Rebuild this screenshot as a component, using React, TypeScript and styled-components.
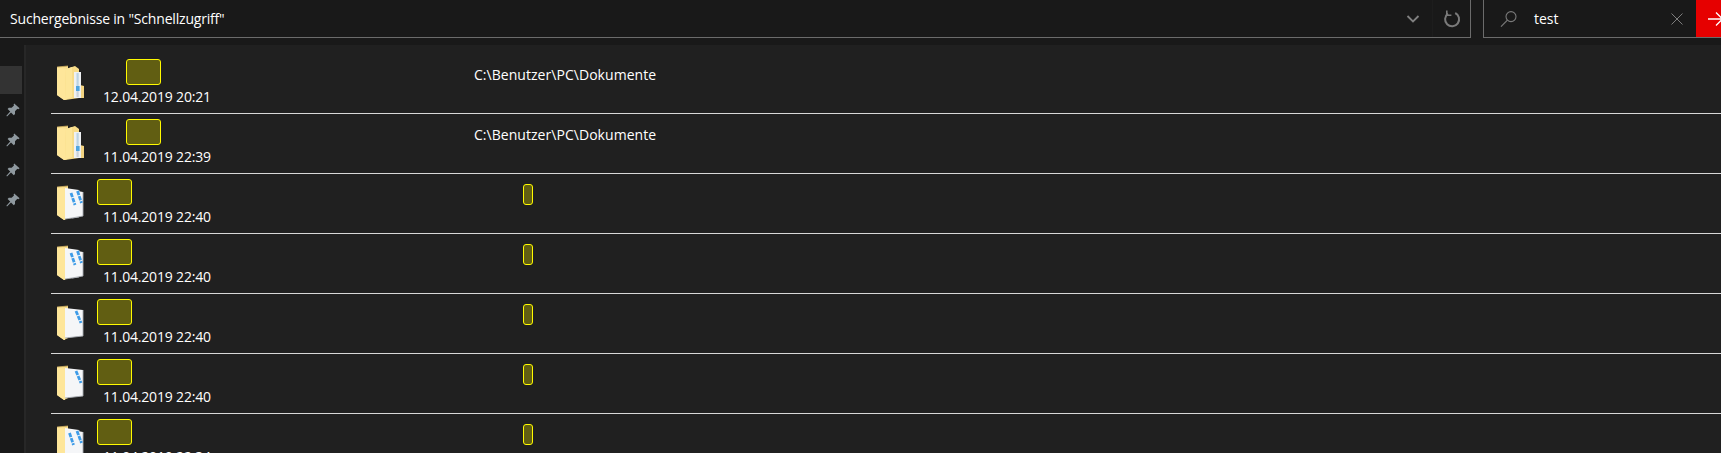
import React from "react";
import styled, { createGlobalStyle } from "styled-components";

const Global = createGlobalStyle`
  html, body { margin: 0; padding: 0; background: #191919; height: 100%; overflow: hidden; }
  #root { height: 453px; overflow: hidden; }
`;

const Page = styled.div`
  width: 1721px;
  height: 453px;
  overflow: hidden;
  background: #191919;
  color: #fff;
  font-family: "Open Sans", "Noto Sans", "Liberation Sans", sans-serif;
  font-size: 14px;
  display: flex;
  flex-direction: column;
`;

const TopBar = styled.header`
  flex: none;
  height: 38px;
  display: flex;
  gap: 12px;
`;

const AddressBar = styled.div`
  width: 1471px;
  box-sizing: border-box;
  border-bottom: 1px solid #6b6b6b;
  border-right: 1px solid #6b6b6b;
  display: flex;
  align-items: center;
  padding-left: 10px;
`;

const Title = styled.div`
  flex: 1;
  white-space: nowrap;
  letter-spacing: -0.19px;
`;

const BarButton = styled.div<{ $split?: boolean }>`
  width: ${(p) => (p.$split ? 38 : 39)}px;
  height: 37px;
  display: flex;
  align-items: center;
  justify-content: center;
  border-left: ${(p) => (p.$split ? "1px solid #1d1d1d" : "none")};
  box-sizing: border-box;
`;

const SearchBox = styled.div`
  flex: 1;
  box-sizing: border-box;
  border-bottom: 1px solid #6b6b6b;
  border-left: 1px solid #6b6b6b;
  display: flex;
  align-items: center;
`;

const SearchIconCell = styled.div`
  width: 50px;
  height: 37px;
  display: flex;
  align-items: center;
  justify-content: center;
  box-sizing: border-box;
`;

const SearchText = styled.div`
  flex: 1;
`;

const ClearCell = styled.div`
  width: 39px;
  display: flex;
  justify-content: center;
`;

const GoButton = styled.div`
  width: 25px;
  height: 37px;
  background: #e60000;
  overflow: hidden;
  display: flex;
  align-items: center;
  padding-left: 12px;
  box-sizing: border-box;
`;

const Main = styled.main`
  flex: 1;
  min-height: 0;
  display: flex;
  padding-top: 7px;
`;

const Sidebar = styled.aside`
  width: 24px;
  flex: none;
  padding-top: 21px;
  border-right: 2px solid #272727;
`;

const ActiveSlot = styled.div`
  width: 22px;
  height: 28px;
  margin-bottom: 1px;
  background: #333;
`;

const PinSlot = styled.div`
  width: 22px;
  height: 30px;
  padding-left: 4px;
  box-sizing: border-box;
  display: flex;
  align-items: center;
  justify-content: center;
`;

const Content = styled.section`
  flex: 1;
  background: #202020;
  padding: 9px 0 0 25px;
  overflow: hidden;
`;

const Row = styled.div`
  height: 60px;
  box-sizing: border-box;
  border-bottom: 1px solid #d8d8d8;
  display: flex;
  padding-left: 6px;
`;

const IconCell = styled.div`
  width: 40px;
  flex: none;
  padding-top: 10px;
  box-sizing: border-box;
  svg { display: block; filter: blur(0.25px); }
`;

const NameCell = styled.div`
  width: 377px;
  flex: none;
  padding-top: 5px;
  box-sizing: border-box;
`;

const Mark = styled.div<{ $w: number; $h: number; $ml?: number }>`
  width: ${(p) => p.$w}px;
  height: ${(p) => p.$h}px;
  margin-left: ${(p) => p.$ml ?? 0}px;
  box-sizing: border-box;
  background: #615e12;
  border: 1px solid #fffa00;
  border-radius: 3px;
`;

const DateText = styled.div`
  margin: 2px 0 0 6px;
  line-height: 19px;
  color: #fff;
  letter-spacing: -0.18px;
  white-space: nowrap;
`;

const PathCell = styled.div`
  padding-top: 11px;
  line-height: 19px;
  white-space: nowrap;
  letter-spacing: 0.04px;
`;

const SmallMarkCell = styled.div`
  padding-top: 10px;
`;

const Chevron = () => (
  <svg width="14" height="10" viewBox="0 0 14 10" fill="none">
    <path d="M1.5 2 L7 7.5 L12.5 2" stroke="#808080" strokeWidth="1.8" />
  </svg>
);

const Refresh = () => (
  <svg width="18" height="18" viewBox="0 0 18 18" fill="none">
    <path d="M5 3.6 A7 7 0 1 0 12.2 3" stroke="#7a7a7a" strokeWidth="2" />
    <path d="M3.8 0.6 L3.8 5.2 L8.4 5.2" stroke="#7a7a7a" strokeWidth="1.6" />
  </svg>
);

const SearchGlass = () => (
  <svg width="18" height="18" viewBox="0 0 18 18" fill="none">
    <circle cx="11" cy="6.6" r="5" stroke="#7a7a7a" strokeWidth="1.1" />
    <path d="M7.4 10.2 L1 16.6" stroke="#7a7a7a" strokeWidth="1.2" />
  </svg>
);

const Cross = () => (
  <svg width="12" height="12" viewBox="0 0 12 12" fill="none">
    <path d="M0.5 0.5 L11.5 11.5 M11.5 0.5 L0.5 11.5" stroke="#7d7d7d" strokeWidth="1" />
  </svg>
);

const Arrow = () => (
  <svg width="20" height="14" viewBox="0 0 20 14" fill="none" style={{ flex: "none" }}>
    <path d="M0 7 H14 M8 0.5 L14.5 7 L8 13.5" stroke="#fff" strokeWidth="1.3" />
  </svg>
);

const Pin = () => (
  <svg width="14" height="14" viewBox="0 0 14 14">
    <path
      d="M8.2 0.4 L13.6 5.2 L12.4 6.2 L11.4 5.8 L9 8.2 L9 11 L7.8 12.2 L5 9.4 L1 13.4 L0.4 12.8 L4.2 8.6 L1.6 6 L2.8 4.8 L5.6 4.8 L8 2.6 L7.6 1.4 Z"
      fill="#8f999f"
    />
  </svg>
);

type Kind = "zip" | "docs" | "doc" | "many";

const Paper = ({ x, y, w, h }: { x: number; y: number; w: number; h: number }) => (
  <>
    <path
      d={`M${x} ${y} L${x + w} ${y + 2} L${x + w} ${y + h - 2} L${x} ${y + h} Z`}
      fill="#f5f6f8"
    />
    <path
      d={`M${x + w} ${y + 2} L${x + w} ${y + h - 2} L${x} ${y + h}`}
      fill="none"
      stroke="#a9adb2"
      strokeWidth="0.9"
    />
  </>
);

const Squiggle = ({ d }: { d: string }) => (
  <path d={d} fill="none" stroke="#3e9ce8" strokeWidth="2.8" strokeDasharray="4.4 1" />
);

const FolderBase = ({ kind }: { kind: Kind }) => (
  <>
    <path d="M0 3 L11 2 L11 34 L7 36 L0 31 Z" fill="#fbdf8f" />
    <path d="M0 3 L9 5 L8 36 L7 36 L0 31 Z" fill="#fee69a" />
    <path d="M0 3 L11 2" stroke="#c9a95c" strokeWidth="0.8" />
    {kind === "zip" && <path d="M9 5 L18 2 L22 5 L22 34 L8 36 Z" fill="#f8dc88" />}
  </>
);

const FolderIcon = ({ kind }: { kind: Kind }) => (
  <svg width="28" height="37" viewBox="0 0 28 37">
    <FolderBase kind={kind} />
    {kind === "zip" && (
      <>
        <path d="M9 5 L15 3 L15 33 L8 36 Z" fill="#fde699" />
        <path d="M23 21 L27 22 L27 34 L23 34 Z" fill="#f3d482" />
        <rect x="17" y="8" width="7" height="26" fill="#eef1f3" />
        <rect x="19.5" y="9" width="2.2" height="14" fill="#bcd3e2" />
        <rect x="19" y="22" width="3.6" height="5" fill="#4fa5e0" />
        <rect x="19.5" y="27" width="2.2" height="6" fill="#cbd2d8" />
      </>
    )}
    {kind === "docs" && (
      <>
        <Paper x={8} y={4} w={14} h={31} />
        <Paper x={15} y={6} w={11} h={28} />
        <Squiggle d="M14 9 L18 21" />
        <Squiggle d="M20.5 7 L24.5 19" />
      </>
    )}
    {kind === "doc" && (
      <>
        <Paper x={8} y={4} w={18} h={30} />
        <Squiggle d="M19 7 L24 19" />
      </>
    )}
    {kind === "many" && (
      <>
        <Paper x={8} y={4} w={14} h={31} />
        <Paper x={15} y={6} w={11} h={28} />
        <Squiggle d="M12.5 9 L16.5 21" />
        <Squiggle d="M20 7 L24.5 19" />
      </>
    )}
  </svg>
);

type Item = {
  kind: Kind;
  indent: number;
  date: string;
  path?: string;
};

const items: Item[] = [
  { kind: "zip", indent: 29, date: "12.04.2019 20:21", path: "C:\\Benutzer\\PC\\Dokumente" },
  { kind: "zip", indent: 29, date: "11.04.2019 22:39", path: "C:\\Benutzer\\PC\\Dokumente" },
  { kind: "docs", indent: 0, date: "11.04.2019 22:40" },
  { kind: "docs", indent: 0, date: "11.04.2019 22:40" },
  { kind: "doc", indent: 0, date: "11.04.2019 22:40" },
  { kind: "doc", indent: 0, date: "11.04.2019 22:40" },
  { kind: "many", indent: 0, date: "11.04.2019 22:34" },
];

export default function App() {
  return (
    <Page>
      <Global />
      <TopBar>
        <AddressBar>
          <Title>Suchergebnisse in "Schnellzugriff"</Title>
          <BarButton><Chevron /></BarButton>
          <BarButton $split><Refresh /></BarButton>
        </AddressBar>
        <SearchBox>
          <SearchIconCell><SearchGlass /></SearchIconCell>
          <SearchText>test</SearchText>
          <ClearCell><Cross /></ClearCell>
          <GoButton><Arrow /></GoButton>
        </SearchBox>
      </TopBar>
      <Main>
        <Sidebar>
          <ActiveSlot />
          {[0, 1, 2, 3].map((i) => (
            <PinSlot key={i}><Pin /></PinSlot>
          ))}
        </Sidebar>
        <Content>
          {items.map((item, i) => (
            <Row key={i}>
              <IconCell><FolderIcon kind={item.kind} /></IconCell>
              <NameCell>
                <Mark $w={35} $h={26} $ml={item.indent} />
                <DateText>{item.date}</DateText>
              </NameCell>
              {item.path ? (
                <PathCell>{item.path}</PathCell>
              ) : (
                <SmallMarkCell><Mark $w={10} $h={21} $ml={49} /></SmallMarkCell>
              )}
            </Row>
          ))}
        </Content>
      </Main>
    </Page>
  );
}
